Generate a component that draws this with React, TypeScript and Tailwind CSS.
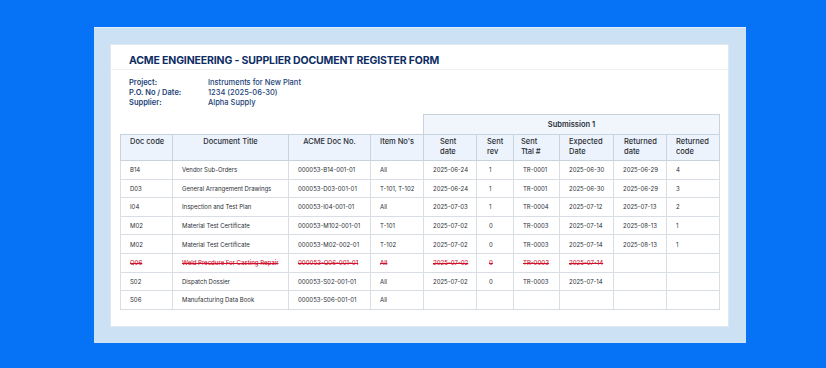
const rows = [
  { code: "B14", title: "Vendor Sub-Orders", doc: "000053-B14-001-01", item: "All", sent: "2025-06-24", rev: "1", ttal: "TR-0001", exp: "2025-06-30", ret: "2025-06-29", rc: "4" },
  { code: "D03", title: "General Arrangement Drawings", doc: "000053-D03-001-01", item: "T-101, T-102", sent: "2025-06-24", rev: "1", ttal: "TR-0001", exp: "2025-06-30", ret: "2025-06-29", rc: "3" },
  { code: "I04", title: "Inspection and Test Plan", doc: "000053-I04-001-01", item: "All", sent: "2025-07-03", rev: "1", ttal: "TR-0004", exp: "2025-07-12", ret: "2025-07-13", rc: "2" },
  { code: "M02", title: "Material Test Certificate", doc: "000053-M102-001-01", item: "T-101", sent: "2025-07-02", rev: "0", ttal: "TR-0003", exp: "2025-07-14", ret: "2025-08-13", rc: "1" },
  { code: "M02", title: "Material Test Certificate", doc: "000053-M02-002-01", item: "T-102", sent: "2025-07-02", rev: "0", ttal: "TR-0003", exp: "2025-07-14", ret: "2025-08-13", rc: "1" },
  { code: "Q06", title: "Weld Precdure For Casting Repair", doc: "000053-Q06-001-01", item: "All", sent: "2025-07-02", rev: "0", ttal: "TR-0003", exp: "2025-07-14", ret: "", rc: "", void: true },
  { code: "S02", title: "Dispatch Dossier", doc: "000053-S02-001-01", item: "All", sent: "2025-07-02", rev: "0", ttal: "TR-0003", exp: "2025-07-14", ret: "", rc: "" },
  { code: "S06", title: "Manufacturing Data Book", doc: "000053-S06-001-01", item: "All", sent: "", rev: "", ttal: "", exp: "", ret: "", rc: "" },
];

const widths = [52, 116, 82, 53, 53, 37, 46, 54, 53, 53];

export default function App() {
  return (
    <div className="w-[826px] h-[368px] bg-[#0672f6] pt-[27px] pl-[94px] overflow-hidden font-['Inter',sans-serif]">
      <div className="w-[652px] h-[316px] bg-[#cde1f5] border-t border-[#e2edf9] px-[16px] pt-[16px]">
        <div className="w-[619px] h-[283px] bg-white border border-[#dfe8f2] px-[9px]">
          {/* title strip */}
          <div className="-mx-[9px] px-[18px] pt-[9px] pb-[2px] border-b border-[#eef2f7]">
            <h1 className="text-[10.5px] leading-[13px] font-bold text-[#0d2d63] tracking-[-0.15px]">
              ACME ENGINEERING - SUPPLIER DOCUMENT REGISTER FORM
            </h1>
          </div>
          <div className="pl-[9px] pt-[8px] grid grid-cols-[79px_1fr] text-[7.5px] leading-[10px] text-[#1b3f78]">
            <span className="font-semibold">Project:</span>
            <span className="font-medium">Instruments for New Plant</span>
            <span className="font-semibold">P.O. No / Date:</span>
            <span className="font-medium">1234 (2025-06-30)</span>
            <span className="font-semibold">Supplier:</span>
            <span className="font-medium">Alpha Supply</span>
          </div>
          <table className="mt-[6px] w-[599px] table-fixed border-collapse text-[6px] text-[#2b2f36]">
            <colgroup>
              {widths.map((w, i) => (
                <col key={i} style={{ width: w }} />
              ))}
            </colgroup>
            <thead>
              <tr className="h-[20px]">
                <th colSpan={4} className="p-0"></th>
                <th colSpan={6} className="border border-[#c9d3de] bg-[#f1f6fd] text-center font-semibold text-[7.5px] text-[#2a2e35]">
                  Submission 1
                </th>
              </tr>
              <tr className="h-[26px] bg-[#edf3fc] text-[7.5px] text-[#2a2e35] leading-[9.5px] align-top">
                <th className="border border-[#c9d3de] text-left pt-[2px] pl-[9px] font-medium">Doc code</th>
                <th className="border border-[#c9d3de] text-center pt-[2px] font-medium">Document Title</th>
                <th className="border border-[#c9d3de] text-center pt-[2px] font-medium">ACME Doc No.</th>
                <th className="border border-[#c9d3de] text-left pt-[2px] pl-[9px] font-medium">Item No's</th>
                <th className="border border-[#c9d3de] text-left pt-[2px] pl-[16px] font-medium">Sent<br />date</th>
                <th className="border border-[#c9d3de] text-left pt-[2px] pl-[10px] font-medium">Sent<br />rev</th>
                <th className="border border-[#c9d3de] text-left pt-[2px] pl-[7px] font-medium">Sent<br />Ttal #</th>
                <th className="border border-[#c9d3de] text-left pt-[2px] pl-[9px] font-medium">Expected<br />Date</th>
                <th className="border border-[#c9d3de] text-left pt-[2px] pl-[10px] font-medium">Returned<br />date</th>
                <th className="border border-[#c9d3de] text-left pt-[2px] pl-[9px] font-medium">Returned<br />code</th>
              </tr>
            </thead>
            <tbody>
              {rows.map((r, i) => {
                const cls = r.void
                  ? "border border-[#d9dee5] h-[18.6px] pl-[9px] whitespace-nowrap text-[#d0112b] font-medium line-through"
                  : "border border-[#d9dee5] h-[18.6px] pl-[9px] whitespace-nowrap";
                return (
                  <tr key={i}>
                    <td className={cls}>{r.code}</td>
                    <td className={cls}>{r.title}</td>
                    <td className={cls}>{r.doc}</td>
                    <td className={cls}>{r.item}</td>
                    <td className={cls}>{r.sent}</td>
                    <td className={cls + " pl-[12px]"}>{r.rev}</td>
                    <td className={cls}>{r.ttal}</td>
                    <td className={cls}>{r.exp}</td>
                    <td className={cls}>{r.ret}</td>
                    <td className={cls}>{r.rc}</td>
                  </tr>
                );
              })}
            </tbody>
          </table>
        </div>
      </div>
    </div>
  );
}
